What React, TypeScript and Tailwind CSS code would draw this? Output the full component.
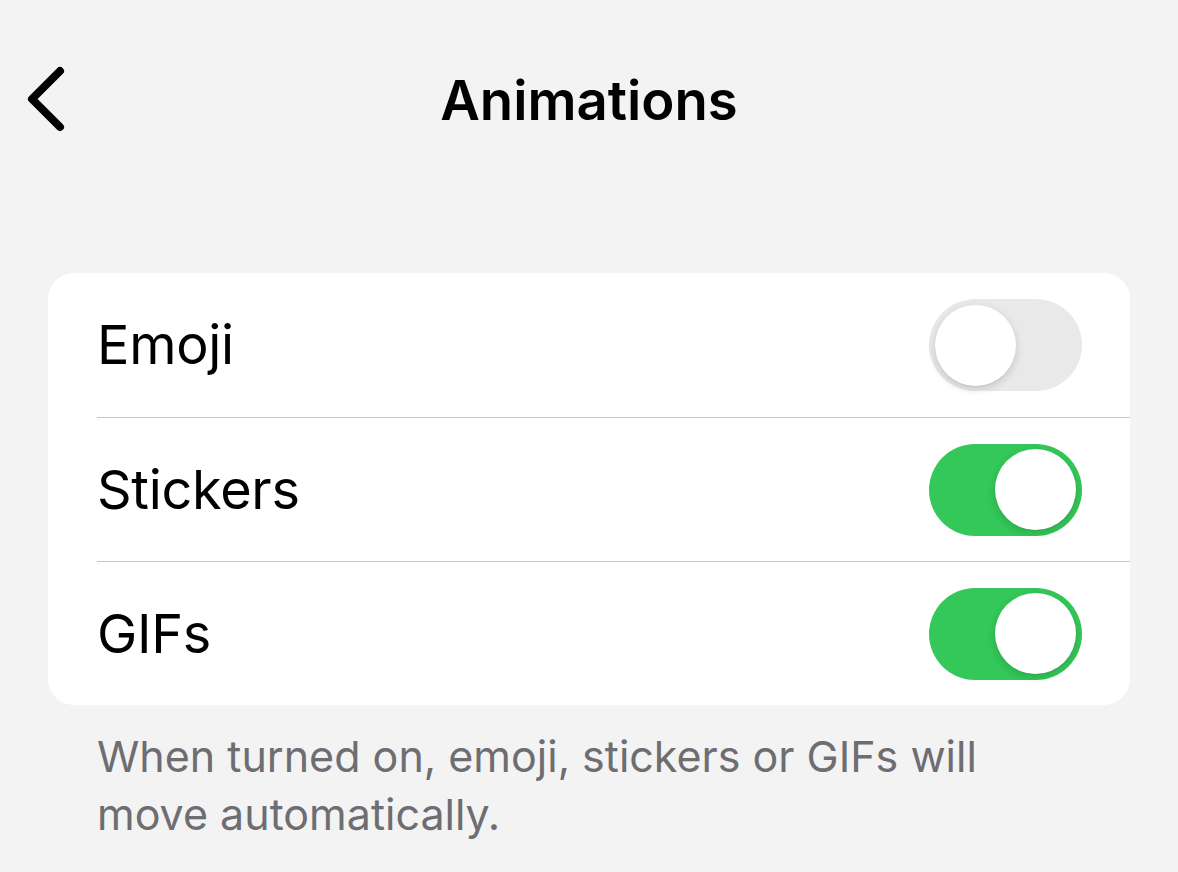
import React, { useState } from 'react';

const Toggle = ({ on, onChange }: { on: boolean; onChange: () => void }) => (
  <button
    onClick={onChange}
    className={`relative w-[153px] h-[92px] rounded-full shrink-0 transition-colors ${
      on ? 'bg-[#34c759]' : 'bg-[#e9e9ea]'
    }`}
  >
    <span
      className={`absolute top-[5.5px] w-[81px] h-[81px] rounded-full bg-white shadow-[0_3px_8px_rgba(0,0,0,0.15),0_1px_1px_rgba(0,0,0,0.06)] transition-all ${
        on ? 'left-[66px]' : 'left-[6px]'
      }`}
    />
  </button>
);

export default function App() {
  const [settings, setSettings] = useState({ Emoji: false, Stickers: true, GIFs: true });
  const rows = Object.keys(settings) as (keyof typeof settings)[];

  return (
    <div className="w-[1178px] h-[872px] bg-[#f3f3f3] font-['Inter','Noto_Sans',sans-serif] text-black overflow-hidden">
      <div className="relative h-[200px] flex items-start justify-center pt-[66px]">
        <button className="absolute left-[26px] top-[66px] w-[44px] h-[68px] flex items-center justify-center">
          <svg width="44" height="68" viewBox="0 0 44 68" fill="none">
            <path d="M34 5 L6 33 L34 61" stroke="#000" strokeWidth="8" strokeLinecap="round" strokeLinejoin="round" />
          </svg>
        </button>
        <h1 className="text-[54.5px] font-semibold leading-[68px]">Animations</h1>
      </div>

      <div className="mt-[73px] mx-[48px] bg-white rounded-[26px] overflow-hidden">
        {rows.map((key, i) => (
          <div key={key} className="flex items-stretch pl-[49px]">
            <div
              className={`flex-1 flex items-center justify-between pr-[48px] h-[144px] ${
                i > 0 ? 'border-t border-[#c8c8ca]' : ''
              }`}
            >
              <span className="text-[54px] leading-none tracking-[-0.3px]">{key}</span>
              <Toggle on={settings[key]} onChange={() => setSettings({ ...settings, [key]: !settings[key] })} />
            </div>
          </div>
        ))}
      </div>

      <p className="mt-[22px] pl-[97px] pr-[150px] text-[43px] leading-[58px] text-[#6d6d72]">
        When turned on, emoji, stickers or GIFs will move automatically.
      </p>
    </div>
  );
}
